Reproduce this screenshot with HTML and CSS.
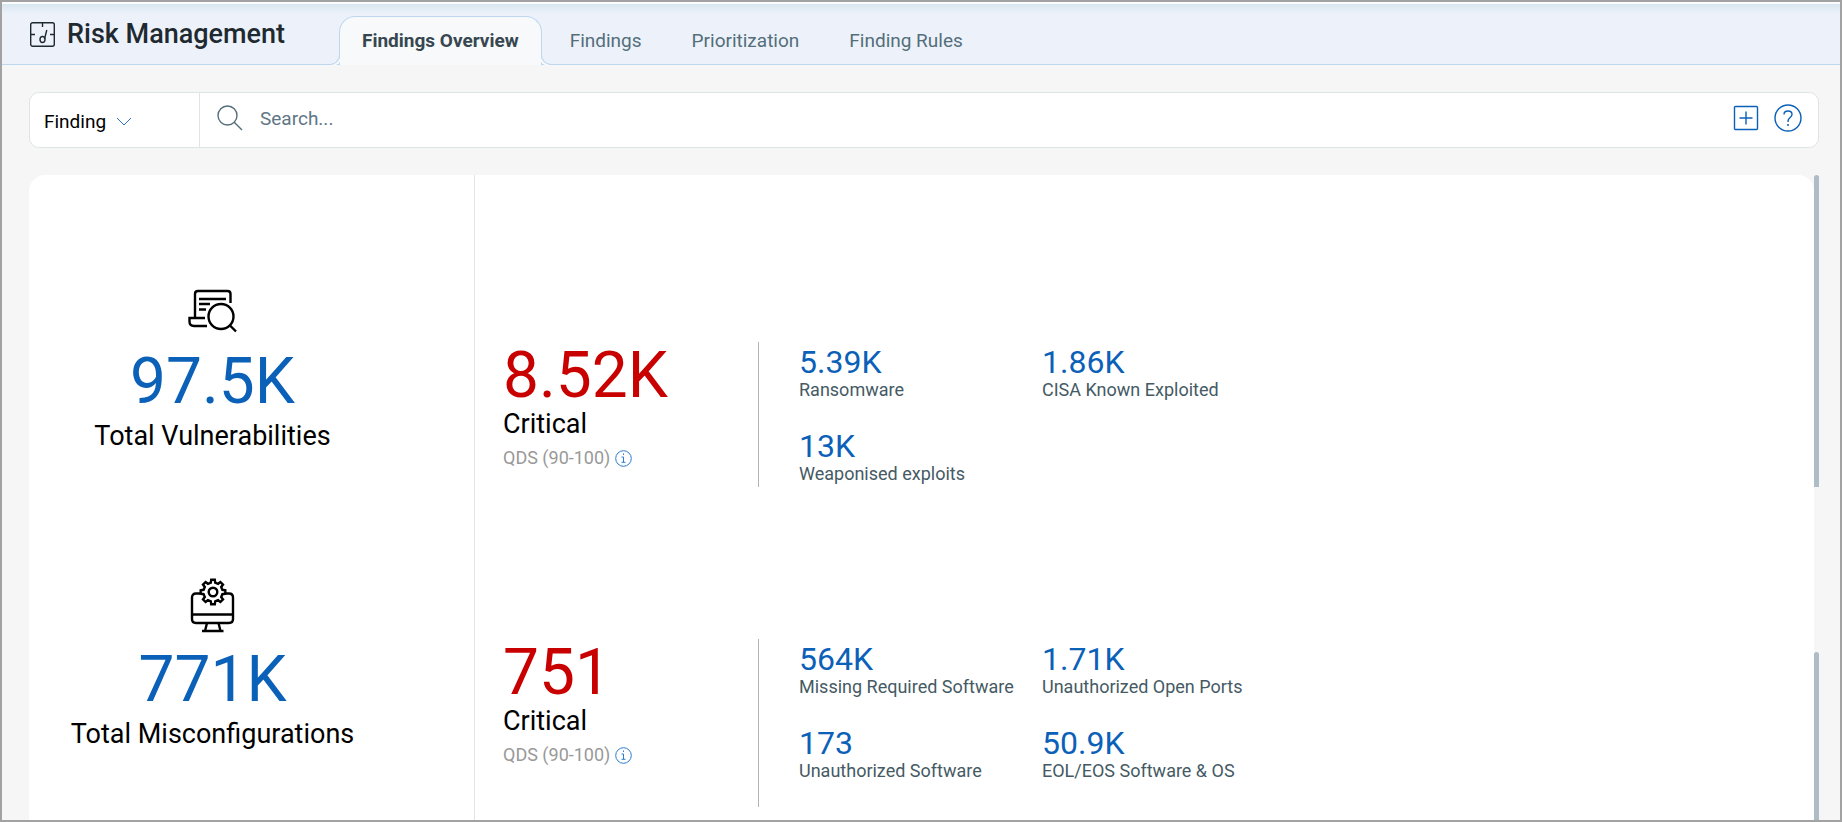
FILE: index.html
```html
<!DOCTYPE html>
<html lang="en">
<head>
<meta charset="utf-8">
<meta name="viewport" content="width=device-width, initial-scale=1">
<title>Risk Management</title>
<link rel="stylesheet" href="styles.css">
</head>
<body>

<header class="topbar">
  <h1 class="title">
    <svg class="title-icon" width="25" height="25" viewBox="0 0 25 25">
      <rect x="0.700" y="0.700" width="23.600" height="23.600" rx="2"/>
      <path d="M12.500 1v4M1 12.500h4M20 12.500h4M16.800 8l-2.300 9"/>
      <ellipse cx="12.500" cy="17.500" rx="2.500" ry="3"/>
    </svg>
    Risk Management
  </h1>
  <nav class="tabs">
    <a href="#" class="tab active">Findings Overview</a>
    <a href="#" class="tab">Findings</a>
    <a href="#" class="tab">Prioritization</a>
    <a href="#" class="tab">Finding Rules</a>
  </nav>
</header>

<main class="content">
  <form class="searchbar">
    <button type="button" class="type-btn">Finding
      <svg width="16" height="9" viewBox="0 0 16 9"><path d="M1 1l7 7 7-7"/></svg>
    </button>
    <div class="search-box">
      <svg class="search-icon" width="26" height="26" viewBox="0 0 26 26">
        <circle cx="10.500" cy="10.500" r="9.500"/>
        <path d="M17 17l8 8"/>
      </svg>
      <input type="text" class="search-input" placeholder="Search..." aria-label="Search">
      <button type="button" class="icon-btn" aria-label="Add">
        <svg width="26" height="26" viewBox="0 0 26 26">
          <rect x="1.500" y="1.500" width="23" height="23" rx="1"/>
          <path d="M13 6.500v13M6.500 13h13"/>
        </svg>
      </button>
      <button type="button" class="icon-btn" aria-label="Help">
        <svg width="28" height="28" viewBox="0 0 28 28">
          <circle cx="14" cy="14" r="13"/>
          <path d="M10 10.500c0-2.300 1.600-3.500 4-3.500s4 1.300 4 3.400c0 3-4 3.200-4 6.600v1"/>
          <circle class="dot" cx="14" cy="21" r="1"/>
        </svg>
      </button>
    </div>
  </form>

  <div class="panel">
    <aside class="totals">
      <div class="total">
        <svg width="72" height="72" viewBox="0 0 72 72">
          <path d="M18 40V17q0-3 3-3h29.500q3 0 3 3v9"/>
          <path d="M28 41H12.500v3.500q0 4.500 4.500 4.500h13"/>
          <path d="M22 22h27M22 27h11M22 32.500h7"/>
          <circle cx="44" cy="39.500" r="12.500"/>
          <path d="M53 48.500l6 6"/>
        </svg>
        <div class="big">97.5K</div>
        <div class="name">Total Vulnerabilities</div>
      </div>
      <div class="total">
        <svg width="72" height="72" viewBox="0 0 72 72">
          <path d="M23 18.500h-4q-4 0-4 4V44q0 4 4 4h33q4 0 4-4V22.500q0-4-4-4h-3"/>
          <path d="M15 39.500h41M30 48l-2 8M41.500 48l2 8M25 56h21.500"/>
          <g transform="translate(36 17)">
            <path d="M-2.200-9.400L-1.800-12.300H1.800L2.200-9.400L5.100-8.200L7.400-10L10-7.400L8.200-5.100L9.400-2.200L12.300-1.800V1.800L9.400 2.200L8.200 5.100L10 7.400L7.400 10L5.100 8.200L2.200 9.400L1.800 12.300H-1.800L-2.200 9.400L-5.100 8.200L-7.400 10L-10 7.400L-8.200 5.100L-9.400 2.200L-12.300 1.800V-1.800L-9.400-2.200L-8.200-5.100L-10-7.400L-7.400-10L-5.100-8.200Z"/>
            <circle r="4.300"/>
          </g>
        </svg>
        <div class="big">771K</div>
        <div class="name">Total Misconfigurations</div>
      </div>
    </aside>

    <div class="details">
      <section class="detail">
        <div class="critical">
          <div class="big">8.52K</div>
          <div class="name">Critical</div>
          <div class="qds">QDS (90-100)
            <svg width="17" height="17" viewBox="0 0 17 17"><circle cx="8.500" cy="8.500" r="7.800"/><path d="M8.500 3.500v1.500M6.500 7h2v5M6.500 12.300h4"/></svg>
          </div>
        </div>
        <div class="stats">
          <div class="stat"><div class="value">5.39K</div><div class="label">Ransomware</div></div>
          <div class="stat"><div class="value">1.86K</div><div class="label">CISA Known Exploited</div></div>
          <div class="stat"><div class="value">13K</div><div class="label">Weaponised exploits</div></div>
        </div>
      </section>
      <section class="detail tall">
        <div class="critical">
          <div class="big">751</div>
          <div class="name">Critical</div>
          <div class="qds">QDS (90-100)
            <svg width="17" height="17" viewBox="0 0 17 17"><circle cx="8.500" cy="8.500" r="7.800"/><path d="M8.500 3.500v1.500M6.500 7h2v5M6.500 12.300h4"/></svg>
          </div>
        </div>
        <div class="stats">
          <div class="stat"><div class="value">564K</div><div class="label">Missing Required Software</div></div>
          <div class="stat"><div class="value">1.71K</div><div class="label">Unauthorized Open Ports</div></div>
          <div class="stat"><div class="value">173</div><div class="label">Unauthorized Software</div></div>
          <div class="stat"><div class="value">50.9K</div><div class="label">EOL/EOS Software &amp; OS</div></div>
        </div>
      </section>
    </div>

    <div class="scroll">
      <div class="thumb"></div>
      <div class="thumb last"></div>
    </div>
  </div>
</main>

</body>
</html>
```
FILE: styles.css
```css
* {
    box-sizing: border-box;
}

body {
    margin: 0;
    min-height: 100vh;
    display: flex;
    flex-direction: column;
    border: 2px solid #a2a2a2;
    background: #f6f6f6;
    font-family: Roboto, "Liberation Sans", sans-serif;
    font-size: 18px;
    color: #000;
}

svg {
    fill: none;
    stroke: currentColor;
    flex: none;
}

button {
    font: inherit;
    background: none;
    border: none;
    padding: 0;
    cursor: pointer;
}

/* header */
.topbar {
    display: flex;
    height: 63px;
    padding-left: 28px;
    border-top: 2px solid #fafcfd;
    border-bottom: 1px solid #bcd7ee;
    background: linear-gradient(#d8e6ef, #edf2fa 10px);
}

.title {
    display: flex;
    align-items: center;
    gap: 12px;
    width: 309px;
    height: 60px;
    margin: 0;
    font-size: 27px;
    font-weight: 500;
    color: #1f2a30;
}

.title-icon {
    stroke-width: 1.4;
}

.tabs {
    display: flex;
    padding-top: 12px;
    font-size: 19px;
}

.tab {
    height: 49px;
    padding: 0 25px;
    line-height: 49px;
    color: #546e7a;
    text-decoration: none;
}

.tab.active {
    position: relative;
    margin-right: 3px;
    padding: 0 22px;
    line-height: 47px;
    border: 1px solid #bcd7ee;
    border-bottom: none;
    border-radius: 16px 16px 0 0;
    background: #f7f9fb;
    color: #37474f;
    font-weight: 700;
}

/* flared feet of the active tab */
.tab.active::before,
.tab.active::after {
    content: "";
    position: absolute;
    bottom: 0;
    width: 12px;
    height: 12px;
    border-bottom: 1px solid #bcd7ee;
}

.tab.active::before {
    right: 100%;
    border-right: 1px solid #bcd7ee;
    border-bottom-right-radius: 10px;
    box-shadow: 2px 1px 0 #f7f9fb;
}

.tab.active::after {
    left: 100%;
    border-left: 1px solid #bcd7ee;
    border-bottom-left-radius: 10px;
    box-shadow: -2px 1px 0 #f7f9fb;
}

/* search */
.content {
    flex: 1;
    display: flex;
    flex-direction: column;
    padding: 27px 21px 0 27px;
}

.searchbar {
    display: flex;
    height: 56px;
    border: 1px solid #dfe4e7;
    border-radius: 10px;
    background: #fff;
    font-size: 19px;
}

.type-btn {
    display: flex;
    align-items: center;
    gap: 10px;
    width: 170px;
    padding-left: 14px;
    padding-top: 2px;
    border-right: 1px solid #dfe4e7;
    color: #000;
}

.type-btn svg {
    color: #2b72c4;
}

.search-box {
    flex: 1;
    display: flex;
    align-items: center;
    padding: 0 16px 4px 17px;
}

.search-icon {
    margin-right: 17px;
    color: #546e7a;
    stroke-width: 1.4;
}

.search-input {
    flex: 1;
    border: none;
    outline: none;
    padding: 0;
    font: inherit;
}

.search-input::placeholder {
    color: #607685;
    opacity: 1;
}

.icon-btn {
    display: flex;
    margin-left: 15px;
    color: #0b60b8;
    stroke-width: 1.4;
}

.icon-btn .dot {
    fill: currentColor;
    stroke: none;
}

/* overview panel */
.panel {
    flex: 1;
    display: flex;
    margin-top: 27px;
}

.totals {
    width: 446px;
    padding: 102px 78px 0 0;
    border-right: 1px solid #dfe6ea;
    border-top-left-radius: 16px;
    background: #fff;
}

.total {
    display: flex;
    flex-direction: column;
    align-items: center;
    margin-bottom: 123px;
}

.total:last-child {
    margin-bottom: 0;
}

.total svg {
    margin-bottom: 1px;
    stroke-width: 2.4;
}

.big {
    font-size: 64px;
    line-height: 64px;
}

.name {
    font-size: 27px;
    line-height: 32px;
}

.total .big {
    margin-bottom: 6px;
    color: #0b60b8;
}

.details {
    flex: 1;
    padding: 167px 0 12px 28px;
    border-top-right-radius: 16px;
    background: #fff;
}

.detail {
    display: flex;
    min-height: 145px;
    margin-bottom: 152px;
}

.detail.tall {
    min-height: 168px;
    margin-bottom: 0;
}

.critical {
    width: 256px;
    padding-top: 2px;
    border-right: 1px solid #b4b4b4;
}

.critical .big {
    color: #c80000;
}

.qds {
    display: flex;
    align-items: center;
    gap: 5px;
    margin-top: 6px;
    line-height: 24px;
    color: #999;
}

.qds svg {
    color: #2b7bd0;
}

.stats {
    display: grid;
    grid-template-columns: 243px 243px;
    grid-auto-rows: 53px;
    row-gap: 31px;
    padding: 4px 0 0 40px;
}

.value {
    margin-bottom: 2px;
    font-size: 32px;
    line-height: 32px;
    color: #0b60b8;
}

.label {
    line-height: 20px;
    color: #455a64;
}

.scroll {
    display: flex;
    flex-direction: column;
    gap: 165px;
    width: 5px;
}

.thumb {
    height: 312px;
    border-radius: 3px 3px 0 0;
    background: #adbcc5;
}

.thumb.last {
    flex: 1;
    height: auto;
}
```
